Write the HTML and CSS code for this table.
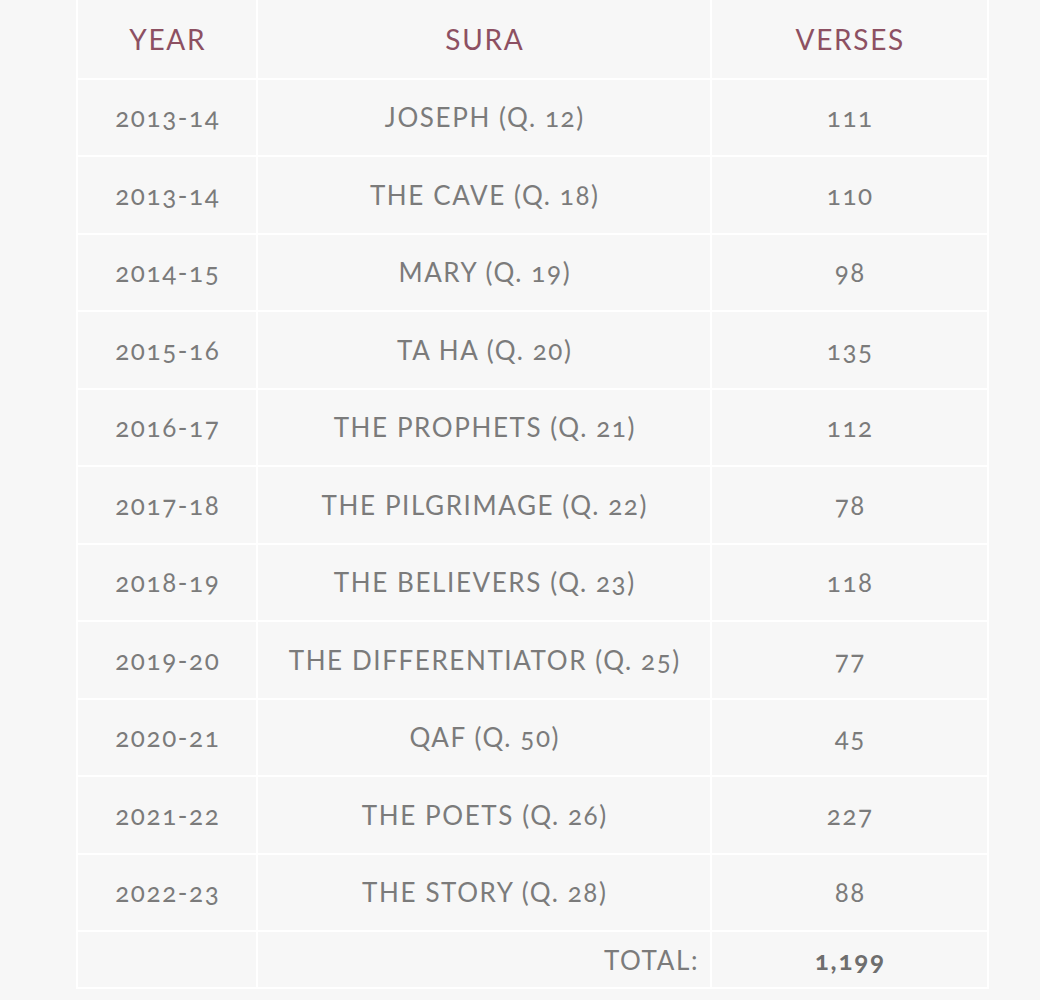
FILE: index.html
```html
<!DOCTYPE html>
<html>
<head>
<meta charset="utf-8">
<link rel="stylesheet" href="styles.css">
</head>
<body>
<div class="page">
<table class="sura-table">
  <thead>
    <tr><th class="c-year">YEAR</th><th class="c-sura">SURA</th><th class="c-verses">VERSES</th></tr>
  </thead>
  <tbody>
    <tr><td>2013-14</td><td>JOSEPH (Q. 12)</td><td>111</td></tr>
    <tr><td>2013-14</td><td>THE CAVE (Q. 18)</td><td>110</td></tr>
    <tr><td>2014-15</td><td>MARY (Q. 19)</td><td>98</td></tr>
    <tr><td>2015-16</td><td>TA HA (Q. 20)</td><td>135</td></tr>
    <tr><td>2016-17</td><td>THE PROPHETS (Q. 21)</td><td>112</td></tr>
    <tr><td>2017-18</td><td>THE PILGRIMAGE (Q. 22)</td><td>78</td></tr>
    <tr><td>2018-19</td><td>THE BELIEVERS (Q. 23)</td><td>118</td></tr>
    <tr><td>2019-20</td><td>THE DIFFERENTIATOR (Q. 25)</td><td>77</td></tr>
    <tr><td>2020-21</td><td>QAF (Q. 50)</td><td>45</td></tr>
    <tr><td>2021-22</td><td>THE POETS (Q. 26)</td><td>227</td></tr>
    <tr><td>2022-23</td><td>THE STORY (Q. 28)</td><td>88</td></tr>
    <tr class="total-row"><td></td><td class="total-label">TOTAL:</td><td class="total-value">1,199</td></tr>
  </tbody>
</table>
</div>
</body>
</html>
```
FILE: styles.css
```css
html, body {
  margin: 0;
  padding: 0;
  background: #f7f7f7;
}
.page {
  padding: 0 53px 0 76px;
  margin-top: -2px;
}
.sura-table {
  width: 911px;
  border-collapse: collapse;
  table-layout: fixed;
  font-family: Lato, "Open Sans", sans-serif;
  font-size: 26px;
  font-weight: 400;
  letter-spacing: 1.6px;
  color: #7b7b7b;
  font-variant-numeric: oldstyle-nums;
}
.sura-table th,
.sura-table td {
  border: 2px solid #ffffff;
  text-align: center;
  vertical-align: middle;
  padding: 0 0 0 1.6px;
  height: 77.5px;
  box-sizing: border-box;
}
.sura-table th {
  font-size: 28px;
  font-weight: 400;
  letter-spacing: 1.7px;
  color: #8d5062;
  height: 79.5px;
}
.c-year { width: 180px; }
.c-sura { width: 454px; }
.c-verses { width: 277px; }
.total-row td {
  height: 57px;
}
.sura-table td.total-label {
  text-align: right;
  padding-right: 11px;
}
.sura-table td.total-value {
  font-weight: 700;
  letter-spacing: 1.8px;
  color: #6e6e6e;
}
```
